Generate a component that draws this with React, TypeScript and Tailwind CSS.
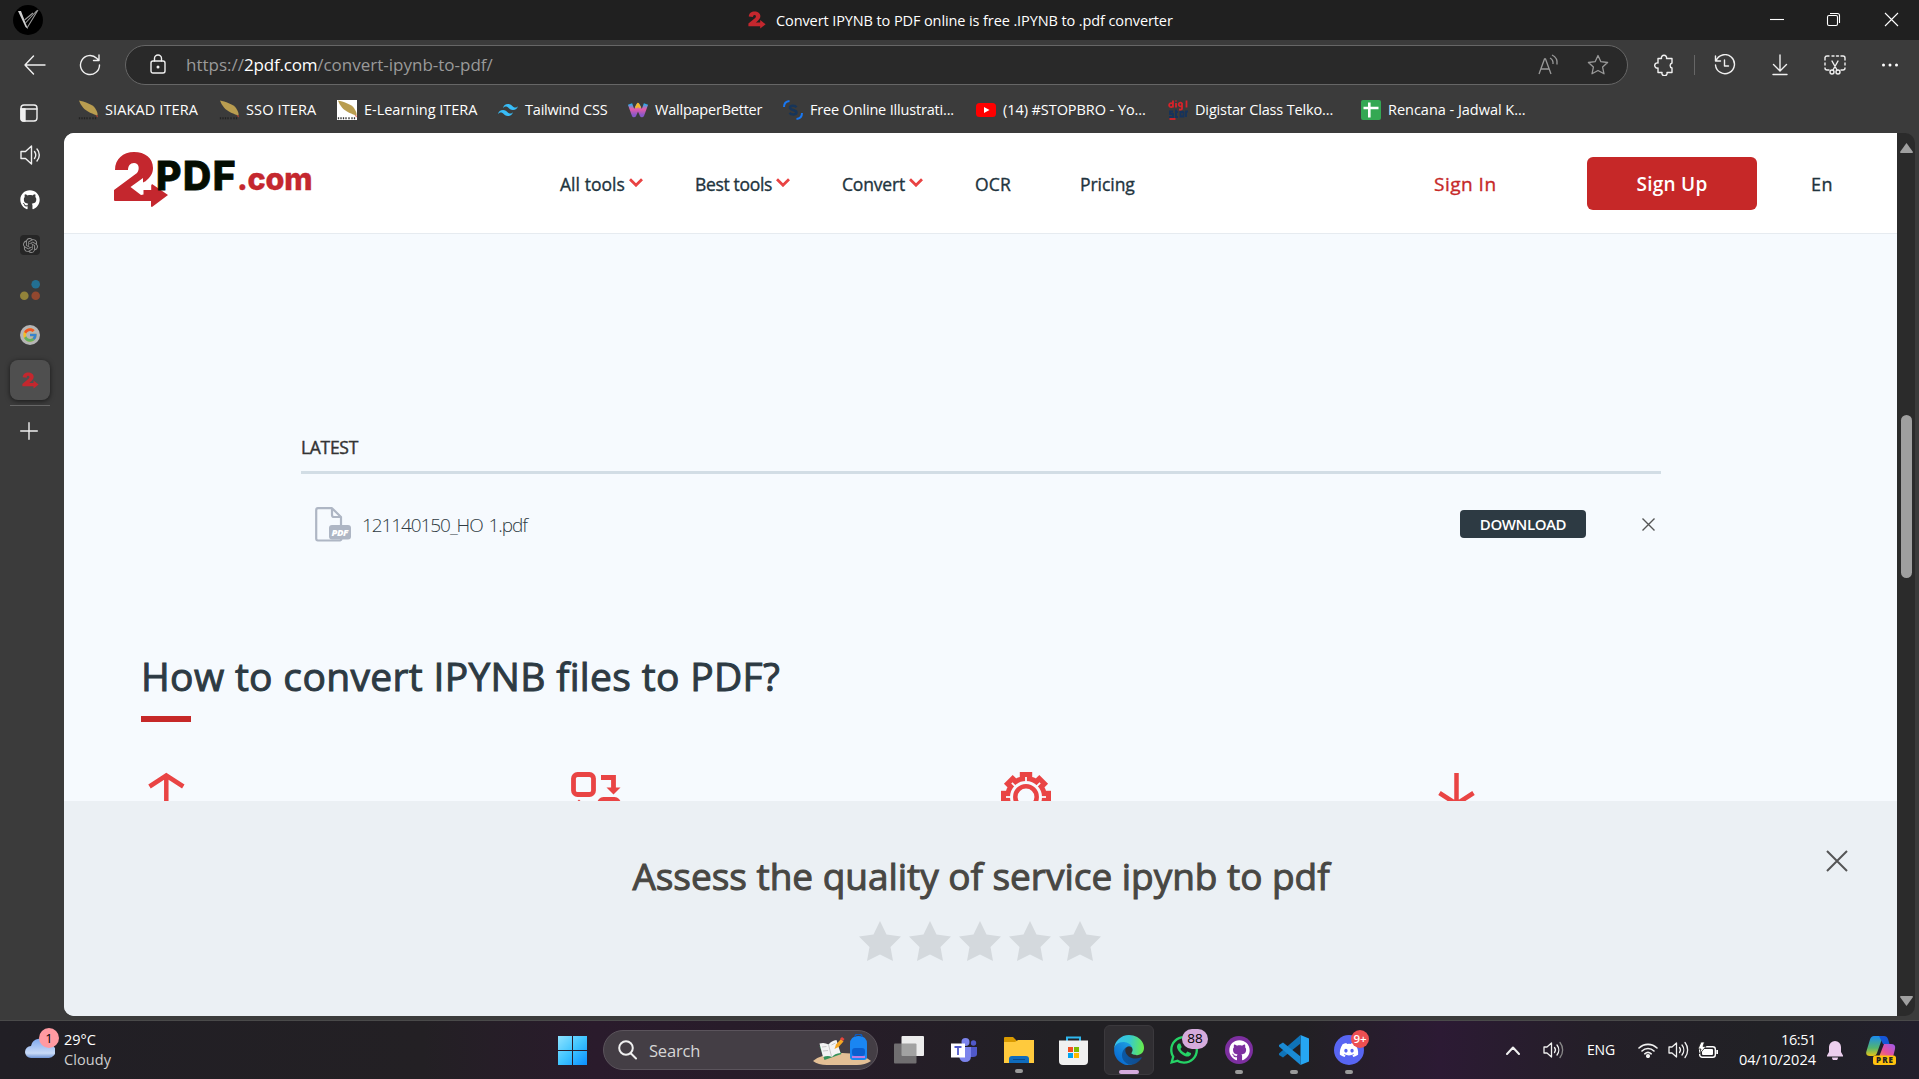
import React from "react";
import { FaGithub, FaDiscord, FaWhatsapp } from "react-icons/fa";
import { FcGoogle } from "react-icons/fc";
import { SiOpenai } from "react-icons/si";

function T({ className = "", children }: { className?: string; children: React.ReactNode }) {
  return <span className={`block shrink-0 whitespace-nowrap ${className}`}>{children}</span>;
}

function TwoMark({ className = "" }: { className?: string }) {
  return (
    <svg viewBox="0 0 54 55" className={className} fill="#c4272e">
      <path d="M1 18C1 7 9 0 20 0C31 0 39 6 39 16C39 22 36 25 32 29L36 35L38 32L54 43L38 55Q37 55 37 54V49H1Q0 49 0 48V38L23 21C26 17 25 11 20 11C16 11 14 14 14 18Z" />
      <path d="M16.500 35L29 26V30.500L33 28.500L37.200 31V38H29.500V42.500L27 43Z" fill="#fff" />
    </svg>
  );
}

function MiniTwo({ className = "" }: { className?: string }) {
  return (
    <svg viewBox="0 0 18 18" className={className} fill="#c4272e">
      <path d="M.8 5.6C.8 2.2 3.4.4 6.6.4s5.8 1.7 5.8 4.7c0 2.4-1.6 3.9-3.3 5.3L7.8 11.6h4.4V9l5.4 4.2-5.4 4.4v-2.4H.4v-2.6l6.800-5.600c1.200-1.200.8-3-.7-3-1 0-1.500.7-1.500 2Z" />
    </svg>
  );
}

function Feather({ light = false }: { light?: boolean }) {
  return (
    <svg viewBox="0 0 20 20" className="size-5 shrink-0">
      {light && <rect width="20" height="20" fill="#fff" />}
      <path d="M1 .5C6 1.500 14 4 17 8c2 3 3 6 2.500 7.500C16 14.500 8 11.500 5 7.500L2.500 4Z" fill="#b99d50" />
      <path d="M17.500 15.200l2 .3.300 2Z" fill="#d8452f" />
      <path d="M1.500 17.300v2M4 17.300v2M6.500 17.300v2M9 17.300v2M12 17.300v2M15 17.300v2M17.500 17.300v2" stroke={light ? "#333" : "#222"} strokeWidth="1.300" />
    </svg>
  );
}

const bookmarks: { wc: string; gap: string; label: string; icon: React.ReactNode }[] = [
  { wc: "w-[93px] tracking-[0.11px]", gap: "mr-[21px]", label: "SIAKAD ITERA", icon: <Feather /> },
  { wc: "w-[70px] tracking-[0.14px]", gap: "mr-[21px]", label: "SSO ITERA", icon: <Feather /> },
  { wc: "w-[113px] tracking-[-0.02px]", gap: "mr-[21px]", label: "E-Learning ITERA", icon: <Feather light /> },
  {
    wc: "w-[82px] tracking-[-0.2px]", gap: "mr-[21px]", label: "Tailwind CSS",
    icon: (
      <svg viewBox="0 0 24 24" className="size-5 shrink-0" fill="#38bdf8">
        <path d="M12 4.800c-3.200 0-5.200 1.600-6 4.800 1.200-1.600 2.600-2.200 4.200-1.800.913.228 1.565.890 2.288 1.624C13.666 10.618 15.027 12 18 12c3.200 0 5.200-1.600 6-4.800-1.200 1.600-2.600 2.200-4.200 1.800-.913-.228-1.565-.890-2.288-1.624C16.337 6.182 14.976 4.800 12 4.800zm-6 7.200c-3.200 0-5.200 1.600-6 4.800 1.200-1.600 2.600-2.200 4.200-1.800.913.228 1.565.890 2.288 1.624 1.177 1.194 2.538 2.576 5.512 2.576 3.200 0 5.200-1.600 6-4.800-1.200 1.600-2.600 2.200-4.200 1.800-.913-.228-1.565-.890-2.288-1.624C10.337 13.382 8.976 12 6 12z" />
      </svg>
    ),
  },
  {
    wc: "w-[107px] tracking-[-0.22px]", gap: "mr-[21px]", label: "WallpaperBetter",
    icon: (
      <svg viewBox="0 0 20 20" className="size-5 shrink-0" fill="none" strokeWidth="4.500" strokeLinejoin="round">
        <defs>
          <linearGradient id="wb" x1="0" y1="0" x2="0" y2="1">
            <stop offset="0" stopColor="#20b0f0" /><stop offset=".45" stopColor="#e85aa8" /><stop offset="1" stopColor="#8858c8" />
          </linearGradient>
        </defs>
        <path d="M2 4l4 11 4-9 4 9 4-11" stroke="url(#wb)" />
        <path d="M8 8l2-4 2 4" stroke="#f5b52c" strokeWidth="2.500" />
      </svg>
    ),
  },
  {
    wc: "w-[145px] tracking-[-0.174px]", gap: "mr-[21px]", label: "Free Online Illustrati...",
    icon: (
      <svg viewBox="0 0 20 20" className="size-5 shrink-0" fill="none">
        <path d="M1 7C1 3.500 3 1.300 6.500 1" stroke="#1877f2" strokeWidth="2" />
        <path d="M19 13c0 3.500-2 5.700-5.500 6" stroke="#1877f2" strokeWidth="2" />
        <path d="M13.500 7.300C12 5.300 7 5.300 7 7.800s6.500 1.800 6.500 4.500-5 2.700-7 .5" stroke="#173559" strokeWidth="2.500" />
      </svg>
    ),
  },
  {
    wc: "w-[143px] tracking-[-0.07px]", gap: "mr-[22px]", label: "(14) #STOPBRO - Yo...",
    icon: (
      <svg viewBox="0 0 20 20" className="size-5 shrink-0">
        <rect y="3" width="20" height="14" rx="3.500" fill="#f00" /><path d="M8 7l5.500 3L8 13Z" fill="#fff" />
      </svg>
    ),
  },
  {
    wc: "w-[138px] tracking-[-0.15px]", gap: "mr-[28px]", label: "Digistar Class Telko...",
    icon: (
      <svg viewBox="0 0 20 20" className="size-5 shrink-0" fill="none" strokeWidth="1.800">
        <path d="M5 .5v7M5 4.500a2 2 0 1 0-.1 1.500M8 3v4.500M8 .5v1M14 3.500a1.800 1.800 0 1 0 0 2M14 3v5.500q0 1.500-3 1M18.500.5v7" stroke="#d8232a" />
        <path d="M5 11.500H2v2.500h3v3H1M8 9.500V17h2M7 12h3M15.500 12h-3v4.500h3V11.500M18 17v-5.500h2" stroke="#16335c" />
        <path d="M1.500 19h6" stroke="#d8232a" />
      </svg>
    ),
  },
  {
    wc: "w-[138px] tracking-[-0.02px]", gap: "", label: "Rencana - Jadwal K...",
    icon: (
      <svg viewBox="0 0 20 20" className="size-5 shrink-0">
        <rect width="20" height="20" rx="2" fill="#34a853" /><path d="M8.300 2.500v15M2.500 8h15" stroke="#fff" strokeWidth="2.600" />
      </svg>
    ),
  },
];

function TitleBar() {
  return (
    <div className="flex h-10 items-center bg-[#202020] pl-[13px]">
      <div className="flex h-[30px] w-[30px] items-center justify-center rounded-full bg-black">
        <svg viewBox="0 0 22 22" className="size-[22px]" fill="none">
          <path d="M1 2h3l5 13L11 20 8.500 18Z" fill="#cfcfcf" />
          <path d="M10 19L21 1M8.500 14L20 1.500M7.500 11L16 4" stroke="#999" strokeWidth="1.100" />
        </svg>
      </div>
      <MiniTwo className="ml-[705px] size-[18px]" />
      <T className="ml-[10px] w-[600px] pt-px text-[14.5px] leading-5 tracking-[-0.1px] text-white">
        Convert IPYNB to PDF online is free .IPYNB to .pdf converter
      </T>
      <svg viewBox="0 0 130 16" className="ml-[394px] h-4 w-[130px]" fill="none" stroke="#fff" strokeWidth="1.100">
        <path d="M0 7.500h14" />
        <rect x="57.500" y="3.500" width="10" height="10" rx="1.500" />
        <path d="M60 1.500h7.500a2 2 0 0 1 2 2V11" />
        <path d="M115 1l13 13M128 1L115 14" />
      </svg>
    </div>
  );
}

const ln = { fill: "none", stroke: "#f0f0f0", strokeWidth: 1.4, strokeLinecap: "round", strokeLinejoin: "round" } as const;

function Toolbar() {
  return (
    <div className="flex h-[50px] items-center pl-6">
      <svg viewBox="0 0 22 20" className="h-5 w-[22px]" {...ln}><path d="M21 10H1M9.500 1L1 10l8.500 9" /></svg>
      <svg viewBox="0 0 22 22" className="ml-[33px] size-[22px]" {...ln}><path d="M20.500 11a9.500 9.500 0 1 1-2.800-6.700L20 6.500M20 1v5.500h-5.500" /></svg>
      <div className="ml-6 flex h-10 w-[1503px] items-center rounded-full border border-[#666] bg-[#292929] pl-6">
        <svg viewBox="0 0 16 20" className="h-5 w-4 -translate-y-px" {...ln}>
          <rect x="1" y="7" width="14" height="12" rx="2" /><path d="M4.500 7V4.500a3.500 3.500 0 0 1 7 0V7" /><circle cx="8" cy="13" r=".8" fill="#fff" />
        </svg>
        <T className="ml-5 w-[600px] text-[17px] leading-6 text-[#9a9a9a]">
          https://<span className="tracking-[-0.2px] text-white">2pdf.com</span>/convert-ipynb-to-pdf/
        </T>
        <svg viewBox="0 0 22 22" className="ml-[752px] size-[22px]" fill="none" stroke="#999" strokeWidth="1.300">
          <path d="M1 20L6.500 5h1L13 20M3 15h8M12 4a6 6 0 0 1 3 6M14 1a9 9 0 0 1 5 9.500" />
        </svg>
        <svg viewBox="0 0 22 22" className="ml-[27px] size-[22px]" fill="none" stroke="#999" strokeWidth="1.300" strokeLinejoin="round">
          <path d="M11 1.500l2.900 6.200 6.700.8-5 4.600 1.400 6.700-6-3.300-6 3.300 1.400-6.700-5-4.600 6.700-.8Z" />
        </svg>
      </div>
      <svg viewBox="0 0 20 22" className="ml-[26px] h-[22px] w-5" {...ln}>
        <path d="M4 4.500h3.500a2.600 2.600 0 1 1 5 0H18v4.500a2.600 2.600 0 0 0 0 5v4.500h-5a2.600 2.600 0 1 1-5 0H4v-4.500a2.600 2.600 0 1 1 0-5Z" />
      </svg>
      <div className="ml-5 h-5 w-px bg-[#666]" />
      <svg viewBox="0 0 22 22" className="ml-[19px] size-[22px]" {...ln}><path d="M2 7a9.500 9.500 0 1 1-.5 4M1.500 2v5h5M10.500 6v6h4" /></svg>
      <svg viewBox="0 0 16 22" className="ml-[36px] h-[22px] w-4" {...ln}><path d="M8 1v15.500M1.500 10.500L8 17l6.500-6.500M1 20.500h14" /></svg>
      <svg viewBox="0 0 22 22" className="ml-9 size-[22px]" {...ln}>
        <path d="M1 6V3.500A2 2 0 0 1 3 2h2M8 2h2M12.500 2h2M17 2h2a2 2 0 0 1 2 2v2M1 9v2M1 14a2 2 0 0 0 2 2h2M21 9v2M21 14a2 2 0 0 1-2 2h-2M8 7l5 9M14 7L9 16" />
        <circle cx="8" cy="18" r="2" /><circle cx="14" cy="18" r="2" />
      </svg>
      <svg viewBox="0 0 18 4" className="ml-[35px] h-1 w-[18px]" fill="#fff"><circle cx="2.500" cy="2" r="1.500" /><circle cx="9" cy="2" r="1.500" /><circle cx="15.500" cy="2" r="1.500" /></svg>
    </div>
  );
}

function Sidebar() {
  return (
    <div className="flex w-16 shrink-0 flex-col pl-5 text-white">
      <svg viewBox="0 0 18 18" className="-mt-[29px] size-[18px]" {...ln}>
        <rect x="1" y="1" width="16" height="16" rx="3" /><path d="M1 5h16" /><path d="M1 5h4v12H3a2 2 0 0 1-2-2Z" fill="#eee" />
      </svg>
      <svg viewBox="0 0 20 20" className="mt-[23px] size-5" {...ln}><path d="M1 6.500h4.500L11.500 1v18l-6-5.500H1ZM14.500 6.500a6 6 0 0 1 0 7M17 4a9 9 0 0 1 0 12" /></svg>
      <FaGithub className="mt-[25px] size-5" />
      <div className="mt-[25px] flex size-5 items-center justify-center rounded bg-[#262626] text-[#909090]"><SiOpenai className="size-[15px]" /></div>
      <svg viewBox="0 0 20 20" className="mt-[25px] size-5"><circle cx="15.700" cy="4.300" r="4.300" fill="#236f92" /><circle cx="4.300" cy="15.700" r="4.300" fill="#92833a" /><circle cx="15.700" cy="15.700" r="4.300" fill="#92482f" /></svg>
      <div className="mt-[25px] flex size-5 items-center justify-center rounded-full bg-[#b5b5b5]"><FcGoogle className="size-4 opacity-80" /></div>
      <div className="-ml-[10px] mt-[15px] flex size-10 items-center justify-center rounded-lg bg-[#4f4f4f] shadow-[0_1px_5px_rgba(0,0,0,.6)]"><MiniTwo className="size-[17px]" /></div>
      <div className="-ml-[10px] mt-[5px] h-px w-10 bg-[#666]" />
      <svg viewBox="0 0 18 18" className="mt-4 size-[18px]" {...ln}><path d="M9 .7v16.600M.7 9h16.600" /></svg>
    </div>
  );
}

function Chevron({ className }: { className: string }) {
  return (
    <svg viewBox="0 0 14 9" className={`h-[9px] w-[14px] shrink-0 ${className}`} fill="none" stroke="#e94444" strokeWidth="2.800"><path d="M1 1.200l6 6 6-6" /></svg>
  );
}

function SiteHeader() {
  return (
    <header className="flex h-[101px] shrink-0 items-center border-b border-[#e6ebf0] bg-white pl-[50px] pt-px text-[17.5px] leading-6 text-[#22343e] [-webkit-text-stroke:0.35px]">
      <TwoMark className="-mt-[8px] h-[55px] w-[54px]" />
      <div className="-ml-[12px] -mt-[13px] flex w-[161px] items-baseline font-['Inter'] leading-10">
        <T className="w-[81px] text-[39px] font-extrabold tracking-[1.600px] text-[#040d02] [-webkit-text-stroke:0.8px]">PDF</T>
        <T className="w-[80px] text-[30.500px] font-extrabold tracking-[-0.2px] text-[#c4272e]">.com</T>
      </div>
      <T className="ml-[243px] w-[65px] tracking-[0.05px]">All tools</T>
      <Chevron className="-mt-[3px] ml-[4px]" />
      <T className="ml-[52px] w-[77px] tracking-[-0.33px]">Best tools</T>
      <Chevron className="-mt-[3px] ml-[4px]" />
      <T className="ml-[52px] w-[63px] tracking-[-0.18px]">Convert</T>
      <Chevron className="-mt-[3px] ml-[4px]" />
      <T className="ml-[52px] w-[37px] tracking-[0.18px]">OCR</T>
      <T className="ml-[68px] w-[56px] tracking-[-0.05px]">Pricing</T>
      <T className="ml-[298px] w-[63px] text-[19px] tracking-[0.5px] text-[#c62828]">Sign In</T>
      <div className="-mt-px ml-[90px] flex h-[53px] w-[170px] items-center justify-center rounded-md bg-[#c62828] text-white [-webkit-text-stroke:0px]">
        <T className="pt-px text-[19px] font-semibold tracking-[0.25px]">Sign Up</T>
      </div>
      <T className="ml-[54px] text-[18px] tracking-[0.5px]">En</T>
    </header>
  );
}

function Latest() {
  return (
    <section className="ml-[237px] mt-[201px] w-[1360px]">
      <T className="text-[17.5px] leading-6 tracking-[-0.3px] text-[#333] [-webkit-text-stroke:0.4px]">LATEST</T>
      <div className="mt-[12px] h-[3px] bg-[#d2dde5]" />
      <div className="mt-[30px] flex h-10 items-center pl-[14px]">
        <svg viewBox="0 0 36 35" className="h-[35px] w-9" fill="none" stroke="#aeb6c4" strokeWidth="2.200" strokeLinejoin="round">
          <path d="M17 33.500H3A2 2 0 0 1 1.200 31.500V3.200A2 2 0 0 1 3 1.200h14L26 10v8M17 1.500V8a2 2 0 0 0 2 2h7M17 33.500h8q1.500-.5 1.500-2" />
          <rect x="14" y="18" width="22" height="14.500" rx="3" fill="#aeb6c4" stroke="none" />
          <text x="25" y="28.800" textAnchor="middle" fontFamily="Open Sans" fontSize="9.500" fontWeight="800" fontStyle="italic" fill="#fff" stroke="none" textLength="17">PDF</text>
        </svg>
        <T className="ml-[11px] pt-px text-[19px] font-light leading-6 tracking-[-1.080px] text-[#2f3b42] [word-spacing:2px]">121140150_HO 1.pdf</T>
        <div className="ml-auto mr-[56px] flex h-7 w-[126px] items-center justify-center rounded bg-[#2d3a43] text-white">
          <T className="text-[15px] font-semibold leading-5 tracking-[-0.4px]">DOWNLOAD</T>
        </div>
        <svg viewBox="0 0 13 13" className="mr-[6px] size-[13px]" stroke="#555" strokeWidth="1.400"><path d="M.5.500l12 12M12.500.500l-12 12" /></svg>
      </div>
    </section>
  );
}

const gearAngles = [0, 45, 90, 135, 180, 225, 270, 315];

function HowTo() {
  return (
    <section className="ml-[77px] mt-[106px]">
      <T className="text-[39px] leading-[52px] tracking-[0.33px] text-[#2d3a43] [-webkit-text-stroke:1px]">How to convert IPYNB files to PDF?</T>
      <div className="mt-[14px] h-[6px] w-[50px] bg-[#c62828]" />
      <div className="mt-[50px] flex h-[50px] text-[#e94444]">
        <svg viewBox="0 0 50 50" className="size-[50px]" fill="none" stroke="currentColor" strokeWidth="4.500"><path d="M25.300 45V4M8.500 14.500L25.300 3.500l17 11" /></svg>
        <svg viewBox="0 0 50 50" className="ml-[380px] size-[50px]" fill="none" stroke="currentColor" strokeWidth="4.800">
          <rect x="2.500" y="2.500" width="20" height="20" rx="4" /><path d="M30 5.500h12.500V16" /><path d="M35.500 15.500h14l-7 7Z" fill="currentColor" stroke="none" />
          <rect x="28.500" y="27.500" width="19" height="19" rx="4" /><path d="M1 34.500l7-7 7 7Z" fill="currentColor" stroke="none" />
        </svg>
        <svg viewBox="0 0 50 50" className="ml-[380px] size-[50px]" fill="none">
          <circle cx="25" cy="25" r="21" fill="currentColor" />
          {gearAngles.map((a) => (
            <rect key={a} x="18.800" y="0" width="12.400" height="10" fill="currentColor" transform={`rotate(${a} 25 25)`} />
          ))}
          <circle cx="25" cy="25" r="16" fill="#f6fafe" />
          {gearAngles.map((a) => (
            <path key={a} d="M25 5v6" stroke="#f6fafe" strokeWidth="1.800" transform={`rotate(${a} 25 25)`} />
          ))}
          <circle cx="25" cy="25" r="10.700" stroke="currentColor" strokeWidth="4.500" />
        </svg>
        <svg viewBox="0 0 50 50" className="ml-[380px] size-[50px]" fill="none" stroke="currentColor" strokeWidth="4.500"><path d="M25.500 1v30M8.500 21L25.500 32l17-11" /></svg>
      </div>
    </section>
  );
}

function Rating() {
  return (
    <div className="absolute inset-x-0 bottom-0 flex h-[215px] flex-col items-center bg-[#ebf0f4] pt-[49px]">
      <T className="ml-px text-[37px] leading-[52px] tracking-[-0.03px] text-[#484743] [-webkit-text-stroke:1px]">Assess the quality of service ipynb to pdf</T>
      <div className="mr-[1px] mt-[19px] flex gap-2">
        {[0, 1, 2, 3, 4].map((i) => (
          <svg key={i} viewBox="0 0 42 40" className="h-10 w-[42px]" fill="#d4d9dd"><path d="M21 0l6.500 13.500L42 15.500 31.500 26 34 40 21 33.500 8 40l2.500-14L0 15.500l14.500-2Z" /></svg>
        ))}
      </div>
      <svg viewBox="0 0 22 22" className="absolute right-[49px] top-[49px] size-[22px]" stroke="#555" strokeWidth="2"><path d="M1 1l20 20M21 1L1 21" /></svg>
    </div>
  );
}

function Speaker({ className, dim = false }: { className: string; dim?: boolean }) {
  return (
    <svg viewBox="0 0 21 18" className={`h-[18px] w-[21px] ${className}`} {...ln} strokeWidth={1.3}>
      <path d="M1 6h3l4.500-4v14L4 12H1Z" /><path d="M11.500 6.500a4 4 0 0 1 0 5" /><path d="M14 4a8 8 0 0 1 0 10" /><path d="M17 1.500a12 12 0 0 1 0 15" stroke={dim ? "#888" : "#f0f0f0"} />
    </svg>
  );
}

function Dash() {
  return <div className="absolute -bottom-[10px] left-1/2 h-1 w-2 -translate-x-1/2 rounded-full bg-[#9a9a9a]" />;
}

function Taskbar() {
  return (
    <div className="flex h-[58px] items-center bg-[linear-gradient(90deg,#211f25_0%,#232024_22%,#2a1b2c_31%,#261d28_45%,#212024_55%,#222024_68%,#2c1a34_75%,#241f28_83%,#212125_92%,#221f2c_100%)] pl-[25px] text-white">
      <div className="relative h-[30px] w-[34px]">
        <svg viewBox="0 0 30 22" className="absolute bottom-[7px] left-0 h-[22px] w-[30px]">
          <defs><linearGradient id="cl" x1="0" y1="0" x2="0" y2="1"><stop offset="0" stopColor="#7fa9ee" /><stop offset=".75" stopColor="#c9dbf8" /><stop offset="1" stopColor="#6f95d6" /></linearGradient></defs>
          <path d="M6 22a6 6 0 0 1 0-12 9 9 0 0 1 17-2 7 7 0 0 1 1 14Z" fill="url(#cl)" />
        </svg>
        <div className="absolute -top-[7px] right-0 flex size-5 items-center justify-center rounded-full bg-[#ff9aa2] text-[13px] leading-none text-black">1</div>
      </div>
      <div className="ml-[5px] w-[60px] text-[14.5px] leading-5">
        <T>29°C</T>
        <T className="tracking-[0.08px] text-[#cfcfcf]">Cloudy</T>
      </div>
      <svg viewBox="0 0 29 29" className="ml-[434px] size-[29px]">
        <defs><linearGradient id="win" x1="0" y1="0" x2="1" y2="1"><stop offset="0" stopColor="#8fe3ff" /><stop offset=".5" stopColor="#3fc4ff" /><stop offset="1" stopColor="#0a8fff" /></linearGradient></defs>
        <path d="M0 0h14v14H0zM15 0h14v14H15zM0 15h14v14H0zM15 15h14v14H15z" fill="url(#win)" />
      </svg>
      <div className="ml-4 flex h-10 w-[275px] items-center rounded-full border border-[#5b545c] bg-[#443e45] pl-[14px]">
        <svg viewBox="0 0 19 20" className="h-5 w-[19px]" {...ln} strokeWidth={2}><circle cx="8" cy="8" r="6.800" /><path d="M13 13.500l5 5" /></svg>
        <T className="ml-[12px] w-[60px] pt-px text-[16.5px] leading-6 tracking-[-0.2px] text-[#d6d6d6]">Search</T>
        <svg viewBox="0 0 58 32" className="ml-[104px] h-8 w-[58px]">
          <path d="M0 27q10-8 29-8t29 8q-6 4-14 4H14Q5 31 0 27Z" fill="#e3bf95" />
          <path d="M6.500 12l16-3 6 11-17 6Z" fill="#35915a" />
          <path d="M6.500 9.500q5-1.500 9 1 3-4 8-4.500l4 13q-6 .5-8.500 4-4-2-9 0Z" fill="#f3f3f3" /><path d="M15.500 10.500l3 12M9 13l4.500-.5M10 17l5-.5M18.500 11l4-2" stroke="#bbb" strokeWidth=".8" />
          <path d="M21.500 15l1.500-4.500 5-5.500 2.500 2.500-5 5.500Z" fill="#f5a623" /><path d="M27 5l2-2 2.500 2L30 7Z" fill="#e8453c" />
          <path d="M37 10q0-8 8.500-8T54 10v13q0 3-3 3H40q-3 0-3-3Z" fill="#1a86f2" /><path d="M42 3q0-3 3.500-3T49 3" stroke="#0d5cc0" fill="none" strokeWidth="1.500" /><rect x="39" y="14" width="13" height="8" rx="3" fill="#0b5fd0" /><path d="M39 23h13" stroke="#c07be0" strokeWidth="2" />
        </svg>
      </div>
      <svg viewBox="0 0 30 28" className="ml-4 h-7 w-[30px]"><rect x="7.500" width="22.500" height="20" rx="1" fill="#ececec" /><rect y="7.500" width="22.500" height="20" rx="1" fill="#8a8a8a" fillOpacity=".75" /></svg>
      <svg viewBox="0 0 26 24" className="ml-[27px] h-6 w-[26px]">
        <circle cx="14.500" cy="4" r="4" fill="#7b83eb" /><circle cx="22.500" cy="5" r="2.700" fill="#5059c9" /><path d="M18 9h8v7q0 3-4 3h-4Z" fill="#5059c9" /><path d="M8 9h12v9q0 6-6 6-5 0-6-6Z" fill="#7b83eb" />
        <rect y="5.500" width="14" height="14" fill="#fff" /><path d="M3.500 9h7M7 9v8" stroke="#5059c9" strokeWidth="1.800" />
      </svg>
      <div className="relative ml-[27px] h-[26px] w-[30px]">
        <svg viewBox="0 0 30 26" className="h-[26px] w-[30px]"><path d="M0 1q0-1 1-1h8l4 4h16q1 0 1 1v10H0Z" fill="#d99a00" /><path d="M0 5h11l3-2h16v23H0Z" fill="#ffca3d" /><path d="M5 26v-4q0-3 3-3h14q3 0 3 3v4Z" fill="#0f6cbd" /><path d="M9 22.500h12" stroke="#0a4a8a" /></svg>
        <Dash />
      </div>
      <svg viewBox="0 0 29 29" className="ml-[25px] size-[29px]"><path d="M8 6V1.500h13V6" stroke="#2fb7ee" strokeWidth="2" fill="none" /><path d="M0 4.500h29V25q0 4-4 4H4q-4 0-4-4Z" fill="#f0f0f0" /><path d="M9 11h5v5H9z" fill="#f25022" /><path d="M15 11h5v5h-5z" fill="#7fba00" /><path d="M9 17h5v5H9z" fill="#00a4ef" /><path d="M15 17h5v5h-5z" fill="#ffb900" /></svg>
      <div className="relative ml-4 flex size-[50px] items-center justify-center rounded-md border border-[#3b393d] bg-[#302e32]">
        <svg viewBox="0 0 256 256" className="size-[30px]">
          <defs>
            <linearGradient id="e1" x1="63" y1="177" x2="241" y2="177" gradientUnits="userSpaceOnUse"><stop offset="0" stopColor="#0c59a4" /><stop offset="1" stopColor="#114a8b" /></linearGradient>
            <linearGradient id="e2" x1="157" y1="100" x2="46" y2="220" gradientUnits="userSpaceOnUse"><stop offset="0" stopColor="#1b9de2" /><stop offset=".5" stopColor="#1483d8" /><stop offset="1" stopColor="#0a6ed1" /></linearGradient>
            <linearGradient id="e3" x1="10" y1="60" x2="250" y2="90" gradientUnits="userSpaceOnUse"><stop offset="0" stopColor="#35c1f1" /><stop offset=".5" stopColor="#36c9d0" /><stop offset="1" stopColor="#66eb4e" /></linearGradient>
          </defs>
          <path d="M231 190a93 93 0 0 1-10 5 101 101 0 0 1-36 6c-47 0-89-33-89-74a31 31 0 0 1 17-27c-43 2-54 46-54 72 0 74 68 81 82 81 8 0 20-2 27-4h1a128 128 0 0 0 67-53 4 4 0 0 0-5-6Z" fill="url(#e1)" />
          <path d="M106 241a79 79 0 0 1-23-21 81 81 0 0 1 30-120c3-1 9-4 16-4a33 33 0 0 1 26 13 33 33 0 0 1 7 20c0-1 25-80-80-80-44 0-81 42-81 79a130 130 0 0 0 12 56 128 128 0 0 0 156 67 75 75 0 0 1-63-10Z" fill="url(#e2)" />
          <path d="M152 149c-1 1-3 3-3 6s2 6 5 8c15 10 43 9 43 9a62 62 0 0 0 31-9 63 63 0 0 0 28-54c0-22-8-37-11-43C225 25 178 0 128 0A128 128 0 0 0 0 126c1-36 37-66 80-66 4 0 24 0 42 10 16 8 24 18 30 28 6 11 7 24 7 29s-3 13-7 22Z" fill="url(#e3)" />
        </svg>
        <div className="absolute bottom-0 h-1 w-5 rounded-full bg-[#d5abdd]" />
      </div>
      <div className="relative ml-[15px] size-[30px]">
        <FaWhatsapp className="size-[32px] -translate-x-px -translate-y-px text-[#25d366]" />
        <div className="absolute -top-[6px] left-[13px] flex h-5 w-[26px] items-center justify-center rounded-full bg-[#d5abdd] text-[13.5px] leading-none text-black">88</div>
      </div>
      <div className="relative ml-[26px] flex size-7 items-center justify-center rounded-full bg-[#7d2fa0]"><FaGithub className="size-[21px]" /><div className="absolute -bottom-[10px] h-1 w-2 rounded-full bg-[#9a9a9a]" /></div>
      <div className="relative ml-[26px] size-[30px]">
        <svg viewBox="0 0 30 30" className="size-[30px]"><path d="M21.500 0L30 3.500v23L21.500 30Z" fill="#26a6f2" /><path d="M21.500 0v8.500L4 22.500 0 20v-1.500Z" fill="#0f73b8" /><path d="M21.500 30v-8.500L4 7.500 0 10v1.500Z" fill="#1a8ad4" /></svg>
        <div className="absolute -bottom-[9px] left-[11px] h-1 w-2 rounded-full bg-[#9a9a9a]" />
      </div>
      <div className="relative ml-[25px] flex size-[30px] items-center justify-center rounded-full bg-[#5865f2]">
        <FaDiscord className="size-5" />
        <div className="absolute -right-[5px] -top-[5px] flex size-[18px] items-center justify-center rounded-full bg-[#ed4f52] text-[11.5px] font-semibold leading-none">9+</div>
        <div className="absolute -bottom-[9px] left-[11px] h-1 w-2 rounded-full bg-[#9a9a9a]" />
      </div>
      <svg viewBox="0 0 14 9" className="ml-[142px] h-[9px] w-[14px]" {...ln} strokeWidth={2}><path d="M1 8l6-6.500L13 8" /></svg>
      <Speaker className="ml-[23px]" dim />
      <T className="ml-[23px] w-[30px] text-[14px] leading-5 tracking-[-0.16px]">ENG</T>
      <svg viewBox="0 0 20 16" className="ml-[21px] h-4 w-5" {...ln} strokeWidth={1.6}><path d="M1 6a13 13 0 0 1 18 0M4 9a8.500 8.500 0 0 1 12 0M6.800 11.800a4.800 4.800 0 0 1 6.400 0" /><circle cx="10" cy="14" r="1.300" fill="#fff" /></svg>
      <Speaker className="ml-[10px]" />
      <svg viewBox="0 0 20 17" className="ml-[9px] h-[17px] w-5"><rect x="1.700" y="4.700" width="15.600" height="10.600" rx="2.500" fill="none" stroke="#fff" strokeWidth="1.400" /><rect x="4" y="7" width="11" height="6" rx="1" fill="#fff" /><path d="M18.300 8h1.700v4h-1.700z" fill="#fff" /><path d="M3 0L0 7h3l-1.500 5L8 4.500H5L6.500 0Z" fill="#fff" stroke="#222" strokeWidth=".8" /></svg>
      <div className="ml-[20px] flex w-[78px] flex-col items-end text-[14.5px] leading-5">
        <T className="tracking-[-0.4px]">16:51</T>
        <T>04/10/2024</T>
      </div>
      <svg viewBox="0 0 16 19" className="ml-[11px] h-[19px] w-4" fill="#eccfee"><path d="M8 0a6 6 0 0 1 6 6v5l2 3.500v1H0v-1L2 11V6a6 6 0 0 1 6-6ZM5 16.500h6a3 3 0 0 1-6 0Z" /></svg>
      <svg viewBox="0 0 30 29" className="ml-[23px] h-[29px] w-[30px]">
        <defs><linearGradient id="c1" x1="0" y1="0" x2="0" y2="1"><stop offset="0" stopColor="#1a8cf0" /><stop offset=".6" stopColor="#54b56e" /><stop offset="1" stopColor="#e8c516" /></linearGradient><linearGradient id="c2" x1="1" y1="0" x2="0" y2="1"><stop offset="0" stopColor="#9a5cf0" /><stop offset=".6" stopColor="#e8509a" /><stop offset="1" stopColor="#f58a4b" /></linearGradient></defs>
        <path d="M8 0h9l-6 17q-1 3-4 3H4q-5 0-3.500-5L4 3.500Q5 0 8 0Z" fill="url(#c1)" /><path d="M13 0h5q3 0 4 3l1.500 5H17Z" fill="#1556d8" /><path d="M18 8h7q5 0 4 5l-2 8H13Z" fill="url(#c2)" />
        <rect x="7" y="19.500" width="23" height="9.500" rx="2.500" fill="#ffc20e" />
        <text x="18.500" y="27.300" textAnchor="middle" fontFamily="Open Sans" fontSize="8" fontWeight="800" fill="#222" textLength="17">PRE</text>
      </svg>
    </div>
  );
}

export default function App() {
  return (
    <div className="flex h-[1079px] w-[1919px] flex-col overflow-hidden bg-[#3b3b3b] font-['Open_Sans','Noto_Sans',sans-serif]">
      <TitleBar />
      <Toolbar />
      <div className="flex h-[43px] shrink-0 items-center pb-[3px] pl-[78px] text-[14.5px] leading-5 text-white">
        {bookmarks.map((b) => (
          <div key={b.label} className={`flex shrink-0 items-center gap-[7px] ${b.gap}`}>
            {b.icon}
            <T className={b.wc}>{b.label}</T>
          </div>
        ))}
      </div>
      <div className="flex h-[883px] shrink-0">
        <Sidebar />
        <main className="relative flex w-[1833px] flex-col overflow-hidden rounded-l-[10px] bg-[#f6fafe]">
          <SiteHeader />
          <Latest />
          <HowTo />
          <Rating />
        </main>
        <div className="flex w-[18px] flex-col items-center rounded-r-[10px] bg-[#2b2b2b] py-[10px]">
          <svg viewBox="0 0 13 10" className="h-[10px] w-[13px]" fill="#a0a0a0"><path d="M6.500 0L13 9q0 1-1 1H1Q0 10 0 9Z" /></svg>
          <div className="mt-[262px] h-[163px] w-[11px] rounded-full bg-[#9f9f9f]" />
          <svg viewBox="0 0 13 10" className="mt-auto h-[10px] w-[13px]" fill="#a0a0a0"><path d="M6.500 10L13 1q0-1-1-1H1Q0 0 0 1Z" /></svg>
        </div>
      </div>
      <div className="h-[5px] shrink-0 border-b border-[#4a4a4a]" />
      <Taskbar />
    </div>
  );
}
